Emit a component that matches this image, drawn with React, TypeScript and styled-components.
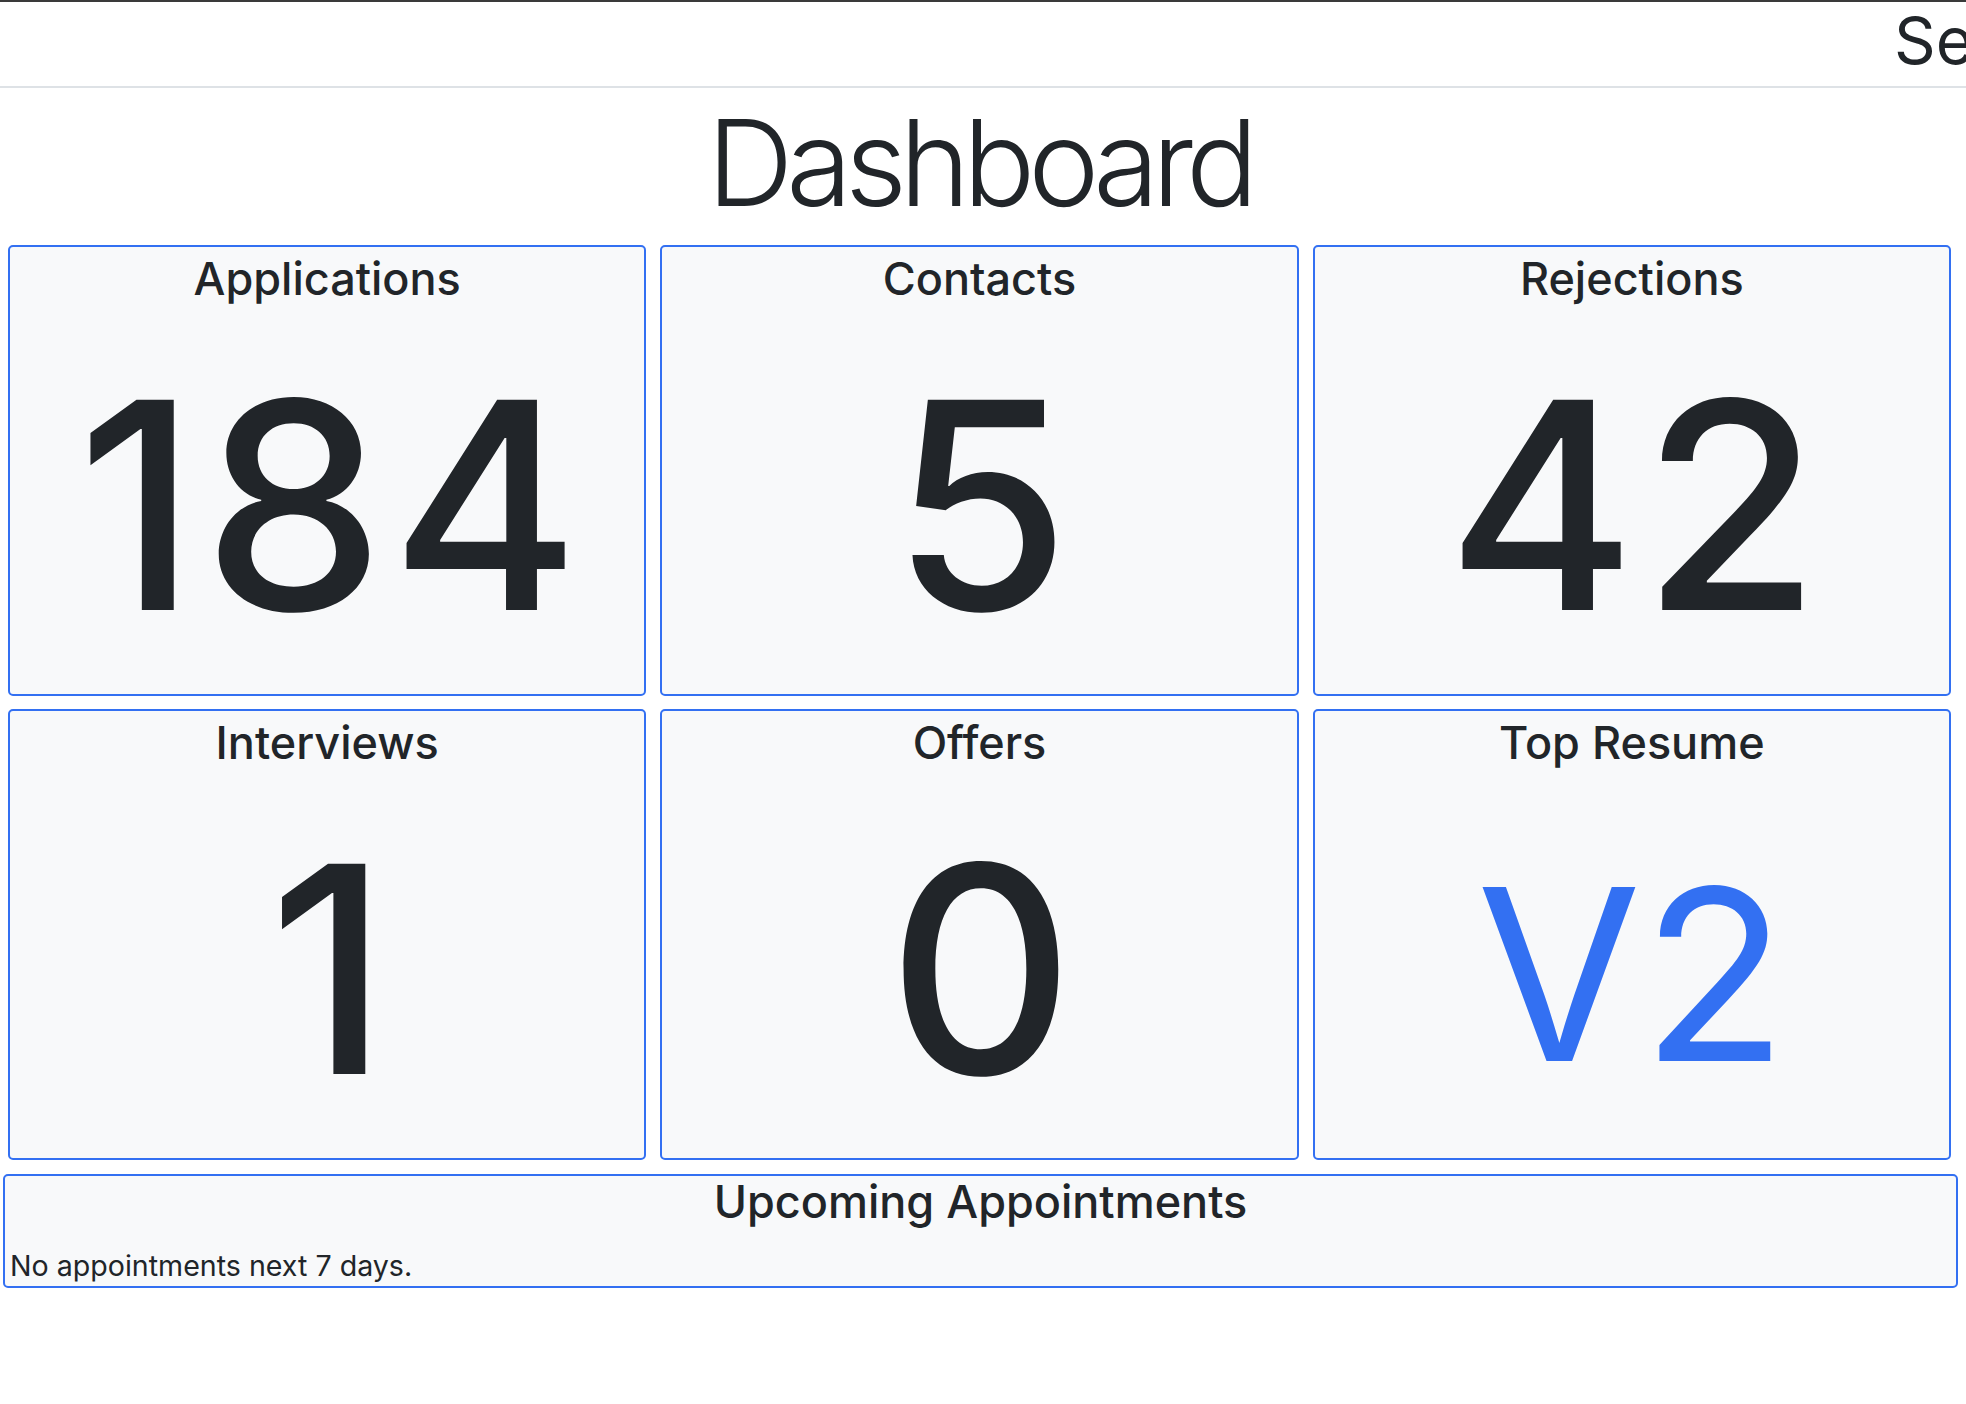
import React from "react";
import styled, { createGlobalStyle } from "styled-components";

const GlobalStyle = createGlobalStyle`
  html, body {
    margin: 0;
    padding: 0;
    background: #ffffff;
    overflow: hidden;
  }
  body {
    font-family: Inter, "Noto Sans", "Liberation Sans", sans-serif;
    color: #212529;
  }
  * { box-sizing: border-box; }
`;

const Page = styled.div`
  width: 1966px;
  min-height: 1404px;
  display: flex;
  flex-direction: column;
`;

const Nav = styled.nav`
  height: 88px;
  display: flex;
  align-items: flex-start;
  border-top: 2px solid #3a3a3a;
  border-bottom: 2px solid #dee2e6;
  overflow: hidden;
`;

const Spacer = styled.div`
  flex: 1;
`;

const NavLink = styled.a`
  flex: 0 0 72px;
  min-width: 0;
  font-size: 65px;
  font-weight: 400;
  line-height: 78px;
  color: #212529;
  white-space: nowrap;
  text-decoration: none;
`;

const Title = styled.h1`
  margin: 3px 8px 0 0;
  font-size: 120px;
  font-weight: 300;
  line-height: 144px;
  letter-spacing: -0.06em;
  text-align: center;
`;

const CardGrid = styled.div`
  margin: 10px 0 0 8px;
  width: 1943px;
  display: grid;
  grid-template-columns: repeat(3, 1fr);
  grid-auto-rows: 451px;
  column-gap: 14px;
  row-gap: 13px;
`;

const Card = styled.section`
  background: #f8f9fa;
  border: 2px solid #3370f2;
  border-radius: 5px;
  padding-top: 5px;
  display: flex;
  flex-direction: column;
  align-items: center;
  overflow: hidden;
`;

const CardTitle = styled.h3`
  margin: 0;
  font-size: 45px;
  font-weight: 500;
  line-height: 54px;
`;

const Value = styled.div<{ $link?: boolean }>`
  margin-top: ${(p) => (p.$link ? "84.5px" : "54.5px")};
  font-size: ${(p) => (p.$link ? "239px" : "289px")};
  line-height: ${(p) => (p.$link ? "239px" : "289px")};
  font-weight: ${(p) => (p.$link ? 400 : 500)};
  color: ${(p) => (p.$link ? "#3370f2" : "#212529")};
  letter-spacing: ${(p) => (p.$link ? "0" : "0.02em")};
  padding-left: ${(p) => (p.$link ? "0" : "0.03em")};
`;

const Appointments = styled.section`
  margin: 14px 0 0 3px;
  width: 1955px;
  height: 114px;
  background: #f8f9fa;
  border: 2px solid #3370f2;
  border-radius: 5px;
  display: flex;
  flex-direction: column;
`;

const AppointmentsTitle = styled.h3`
  margin: 0 0 20px;
  font-size: 45px;
  font-weight: 500;
  line-height: 52px;
  text-align: center;
`;

const EmptyText = styled.p`
  margin: 0;
  padding-left: 5px;
  font-size: 28.6px;
  line-height: 36px;
  font-weight: 400;
`;

const stats: { title: string; value: string; link?: boolean }[] = [
  { title: "Applications", value: "184" },
  { title: "Contacts", value: "5" },
  { title: "Rejections", value: "42" },
  { title: "Interviews", value: "1" },
  { title: "Offers", value: "0" },
  { title: "Top Resume", value: "V2", link: true },
];

export default function App() {
  return (
    <>
      <GlobalStyle />
      <Page>
        <Nav>
          <Spacer />
          <NavLink href="#">Settings</NavLink>
        </Nav>
        <Title>Dashboard</Title>
        <CardGrid>
          {stats.map((s) => (
            <Card key={s.title}>
              <CardTitle>{s.title}</CardTitle>
              <Value $link={s.link}>{s.value}</Value>
            </Card>
          ))}
        </CardGrid>
        <Appointments>
          <AppointmentsTitle>Upcoming Appointments</AppointmentsTitle>
          <EmptyText>No appointments next 7 days.</EmptyText>
        </Appointments>
      </Page>
    </>
  );
}
